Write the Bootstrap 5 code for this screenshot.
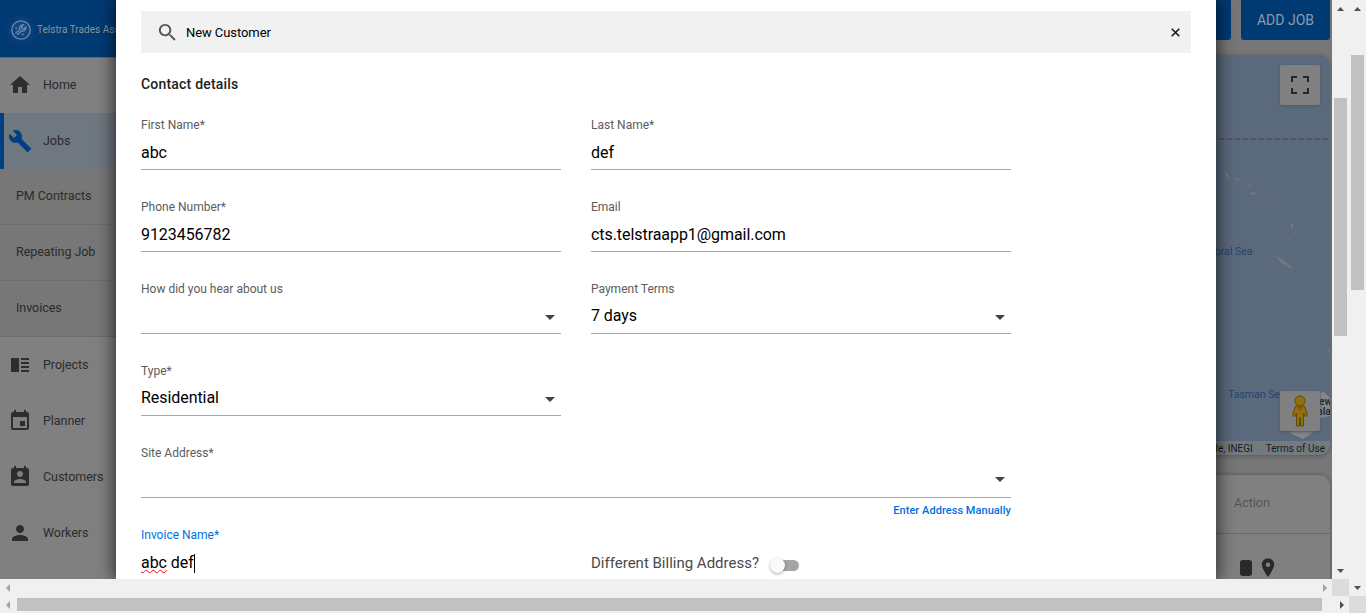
<!DOCTYPE html>
<html lang="en">
<head>
<meta charset="utf-8">
<title>New Customer</title>
<link href="https://cdn.jsdelivr.net/npm/bootstrap@5.3.0/dist/css/bootstrap.min.css" rel="stylesheet">
<style>
body{font-family:Roboto,sans-serif;width:1366px;height:613px;overflow:hidden;background:#f0f0f0;color:#2b2b2b}
svg{display:block;flex:none}
.shell{width:1366px;height:613px}
.pane{width:1332px;height:579px;background:#777}
.side{width:200px;background:#808080;font-size:12.5px;letter-spacing:-.05px}
.brand{height:58px;margin-bottom:-1px;background:#003a73;color:#8e9499;font-size:10px;letter-spacing:.02px;border-bottom:1px solid #5d6b7a;padding:2px 0 0 11px;gap:6px;white-space:nowrap}
.brand svg{filter:drop-shadow(0 0 4px #3568a0)}
.item{height:56px;padding-left:8px;gap:11px}
.item.on{background:#6f7780;border-left:4px solid #003f80;padding-left:4px}
.item.sub{background:#777;border-bottom:1px solid #6e6e6e;padding-left:16px}
.page-right{width:260px;margin-right:2px}
.acts{height:40px;gap:10px}
.acts>div{background:#003a73;color:#8e9aa8;border-radius:0 0 3px 3px;font-size:14px}
.acts .add{width:89px}
.map-box{height:400px;margin-top:15px;background:#5a6a7c;border-radius:0 11px 10px 0;overflow:hidden;box-shadow:0 1px 4px #555}
.over{position:absolute}
.ctl{width:40px;height:40px;right:10px;background:#808080;border-radius:2px;box-shadow:0 1px 3px #4d5560}
.ctl.full{top:10px}
.ctl.peg{top:336px}
.terms{right:0;bottom:0;height:14px;width:260px;background:#737a80;color:#1b1b1b;font-size:10px}
.tbl{margin-top:20px;height:110px;background:#808080;border-radius:0 11px 0 0;box-shadow:0 0 4px #555}
.tbl-h{height:59px;border-bottom:1px solid #696969;padding:0 0 1px 164px;font-size:12.5px;color:#555}
.tbl-r{padding:22px 0 0 167px;gap:3px}
.dialog{left:116px;top:0;width:1100px;height:579px;background:#fff;box-shadow:0 0 16px 2px rgba(0,0,0,.65);padding:11px 25px 0}
.find{height:42px;background:#f1f1f1;color:#000;font-size:13px;letter-spacing:-.08px;padding:0 10px 0 15px;gap:7px}
.find span{padding-top:2px}
.ttl{height:62px;font-size:14px;font-weight:500;letter-spacing:.2px;color:#212121}
.form-w{width:870px}
.fields{display:grid;grid-template-columns:420px 420px;column-gap:30px}
.fld{height:82px}
.fld.wide{grid-column:1/3}
.lab{height:20px;line-height:20px;font-size:12px;letter-spacing:0;color:#5c5c5c}
.lab.act{color:#0070e0}
.val{height:35px;border-bottom:1px solid #a6a6a6;font-size:16px;letter-spacing:-.06px;color:#000;padding-right:6px}
.val.txt{padding-top:2px}
.val svg{margin-top:2px}
.wide .val svg{margin-top:-2px}
.lnk{height:26px;line-height:25px;font-size:11px;font-weight:500;letter-spacing:.05px;color:#0070e0}
.spell{text-decoration:underline wavy #f00 1px;text-underline-offset:1px;text-decoration-skip-ink:none}
.caret{width:1px;height:19px;background:#000}
.bill{font-size:15px;color:#4a4a4a;letter-spacing:0;gap:11px;padding-top:31px}
.tog{width:28px;height:16px;margin-top:1px}
.tog i{width:26px;height:11px;background:#a5a5a5;border-radius:6px;left:3px;top:3px}
.tog b{width:15px;height:15px;border-radius:50%;background:#fafafa;left:0;top:1px;box-shadow:0 1px 3px rgba(0,0,0,.35)}
.vbar{width:17px;padding:7px 0 6px}
.hbar{height:17px;padding:0 5px 0 6px}
.thumb{background:#c1c1c1;width:13px}
.thumb.inner{height:238px;margin-top:87px}
.thumb.outer{height:235px;margin-top:44px}
.thumb.horiz{width:1305px;height:13px;margin-left:7px}
.corner{width:17px;height:17px;background:#dcdcdc}
</style>
</head>
<body>
<div class="shell d-flex">
 <div class="d-flex flex-column">
  <div class="d-flex">
   <div class="d-flex flex-column">
    <div class="pane d-flex justify-content-between position-relative overflow-hidden">
     <nav class="side">
      <div class="brand d-flex align-items-center">
       <svg width="20" height="20" viewBox="0 0 20 20" fill="none" stroke="#6f89a8" stroke-width="1.3"><circle cx="10" cy="10" r="9.2"/><path d="M4.500 13.500 8.700 9.400c-.8-2.500.8-4.800 3.600-4.600L10.600 6.700l.4 1.900 1.900.4 2-1.900c.3 2.700-2 4.600-4.500 3.700L6.300 15"/><path d="M11 13.500 12.500 15M4.500 7.500 6 9"/></svg>
       <span>Telstra Trades Assist</span>
      </div>
      <div class="item d-flex align-items-center"><svg width="24" height="24" viewBox="0 0 24 24" fill="#2d2d2d"><path d="M10 20v-6h4v6h5v-8h3L12 3 2 12h3v8z"/></svg><span>Home</span></div>
      <div class="item on d-flex align-items-center"><svg width="24" height="24" viewBox="0 0 24 24" fill="#003f80"><path d="M22.700 19l-9.100-9.100c.9-2.300.4-5-1.500-6.900-2-2-5-2.400-7.400-1.300L9 6 6 9 1.600 4.700C.4 7.100.9 10.100 2.900 12.100c1.900 1.900 4.600 2.400 6.900 1.500l9.100 9.100c.4.4 1 .4 1.400 0l2.300-2.300c.5-.4.5-1.100.1-1.400z"/></svg><span>Jobs</span></div>
      <div class="item sub d-flex align-items-center">PM Contracts</div>
      <div class="item sub d-flex align-items-center">Repeating Job</div>
      <div class="item sub d-flex align-items-center">Invoices</div>
      <div class="item d-flex align-items-center"><svg width="24" height="24" viewBox="0 0 24 24" fill="#2d2d2d"><path d="M3 5h8v14H3zM13 5h8v2h-8zM13 9h8v2h-8zM13 13h8v2h-8zM13 17h8v2h-8z"/></svg><span>Projects</span></div>
      <div class="item d-flex align-items-center"><svg width="24" height="24" viewBox="0 0 24 24" fill="#2d2d2d"><path d="M17 12h-5v5h5v-5zM16 1v2H8V1H6v2H5c-1.110 0-1.990.9-1.990 2L3 19c0 1.100.89 2 2 2h14c1.100 0 2-.9 2-2V5c0-1.100-.9-2-2-2h-1V1h-2zm3 18H5V8h14v11z"/></svg><span>Planner</span></div>
      <div class="item d-flex align-items-center"><svg width="24" height="24" viewBox="0 0 24 24" fill="#2d2d2d"><path d="M19 3h-1V1h-2v2H8V1H6v2H5c-1.110 0-2 .9-2 2v14c0 1.100.89 2 2 2h14c1.100 0 2-.9 2-2V5c0-1.100-.9-2-2-2zm-7 3c1.660 0 3 1.340 3 3s-1.340 3-3 3-3-1.340-3-3 1.340-3 3-3zm6 12H6v-1c0-2 4-3.100 6-3.100s6 1.100 6 3.100v1z"/></svg><span>Customers</span></div>
      <div class="item d-flex align-items-center"><svg width="24" height="24" viewBox="0 0 24 24" fill="#2d2d2d"><path d="M12 12c2.210 0 4-1.790 4-4s-1.790-4-4-4-4 1.790-4 4 1.790 4 4 4zm0 2c-2.670 0-8 1.340-8 4v2h16v-2c0-2.660-5.330-4-8-4z"/></svg><span>Workers</span></div>
     </nav>
     <main class="page-right">
      <div class="acts d-flex justify-content-end">
       <div class="flex-fill"></div>
       <div class="add d-flex align-items-center justify-content-center">ADD JOB</div>
      </div>
      <div class="map-box position-relative">
       <svg width="260" height="386" viewBox="0 0 260 386">
        <path d="M140 84H260" stroke="#584e5e" stroke-width="1.500" stroke-dasharray="6 2"/>
        <g fill="#74777a"><path d="m153 116 3 1 4 6-3-1zM163 122l5 3-3 0zM166 124l4 0-2 2zM176 127l5 4-2 0zM187 132l3 6-2-2zM181 137l5 1v2l-5-1zM192 142l4 3-3-1zM220 169h3v5l-2-1zM224 176l3 3-2 0zM206 201l6 3 11 9-3 0-9-5zM258 295l2-1v6z"/>
        <path d="M249 338l5-1 6 6v18l-10 2zM220 378l12-10 18 1-8 9-9 6z" fill="#838789"/></g>
        <g fill="#24446f" font-size="10.500"><text x="138" y="200">Coral Sea</text><text x="158" y="343">Tasman Sea</text></g>
        <g fill="#222" font-size="10" font-weight="500"><text x="242" y="350">New</text><text x="236" y="360">Zealand</text></g>
       </svg>
       <div class="ctl full over d-flex align-items-center justify-content-center"><svg width="18" height="18" viewBox="0 0 18 18" fill="none" stroke="#292929" stroke-width="2"><path d="M1 6V1h5M12 1h5v5M17 12v5h-5M6 17H1v-5"/></svg></div>
       <div class="ctl peg over d-flex align-items-center justify-content-center"><svg width="18" height="32" viewBox="0 0 18 32"><path d="M4.500 11h9l3 9-2 2-2-4v13H9.500v-8h-1v8H5.500V18l-2 4-2-2z" fill="#94700a" stroke="#5d4a14"/><path d="M5.500 11h7L9 17z" fill="#96501c"/><circle cx="9" cy="6" r="5" fill="#94700a" stroke="#5d4a14"/></svg></div>
       <div class="terms over d-flex align-items-center justify-content-end"><span class="pe-2">Google, INEGI</span><span class="border-start border-secondary ps-1 pe-1">Terms of Use&hairsp;</span></div>
      </div>
      <div class="tbl">
       <div class="tbl-h d-flex align-items-center">Action</div>
       <div class="tbl-r d-flex">
        <svg width="18" height="24" viewBox="0 0 18 24" fill="#292929"><path d="M3 5.500 5 4h8l2 1.500v13L13 20H5l-2-1.500z"/></svg>
        <svg width="24" height="24" viewBox="0 0 24 24" fill="#292929"><path d="M10 2.500c-3.600 0-6.200 2.700-6.200 6.100C3.800 13 10 21 10 21s6.200-8 6.200-12.400c0-3.400-2.600-6.100-6.200-6.100zm0 8.500a2.300 2.300 0 1 1 0-4.600 2.300 2.300 0 0 1 0 4.600z"/></svg>
       </div>
      </div>
     </main>
     <section class="dialog over">
      <div class="find d-flex align-items-center">
       <svg width="23" height="23" viewBox="0 0 24 24" fill="#555"><path d="M15.500 14h-.79l-.28-.27C15.410 12.590 16 11.110 16 9.500 16 5.910 13.090 3 9.500 3S3 5.910 3 9.500 5.910 16 9.500 16c1.610 0 3.090-.59 4.230-1.570l.27.28v.79l5 4.990L20.490 19l-4.990-5zm-6 0C7.010 14 5 11.990 5 9.500S7.010 5 9.500 5 14 7.010 14 9.500 11.990 14 9.500 14z"/></svg>
       <span class="flex-fill">New Customer</span>
       <svg width="11" height="11" viewBox="0 0 11 11" stroke="#111" stroke-width="1.500"><path d="m1.700 1.700 7.600 7.600m0-7.600-7.600 7.600"/></svg>
      </div>
      <div class="ttl d-flex align-items-center">Contact details</div>
      <div class="form-w">
       <div class="fields">
        <div class="fld"><div class="lab">First Name*</div><div class="val txt d-flex align-items-center">abc</div></div>
        <div class="fld"><div class="lab">Last Name*</div><div class="val txt d-flex align-items-center">def</div></div>
        <div class="fld"><div class="lab">Phone Number*</div><div class="val txt d-flex align-items-center">9123456782</div></div>
        <div class="fld"><div class="lab">Email</div><div class="val txt d-flex align-items-center">cts.telstraapp1@gmail.com</div></div>
        <div class="fld"><div class="lab">How did you hear about us</div><div class="val d-flex align-items-center justify-content-end"><svg width="10" height="5" viewBox="0 0 10 5" fill="#444"><path d="M0 0h10L5 5z"/></svg></div></div>
        <div class="fld"><div class="lab">Payment Terms</div><div class="val d-flex align-items-center justify-content-between"><span>7 days</span><svg width="10" height="5" viewBox="0 0 10 5" fill="#444"><path d="M0 0h10L5 5z"/></svg></div></div>
        <div class="fld"><div class="lab">Type*</div><div class="val d-flex align-items-center justify-content-between"><span>Residential</span><svg width="10" height="5" viewBox="0 0 10 5" fill="#444"><path d="M0 0h10L5 5z"/></svg></div></div>
        <div class="fld wide"><div class="lab">Site Address*</div><div class="val d-flex align-items-center justify-content-end"><svg width="10" height="5" viewBox="0 0 10 5" fill="#444"><path d="M0 0h10L5 5z"/></svg></div><div class="lnk text-end">Enter Address Manually</div></div>
        <div class="fld"><div class="lab act">Invoice Name*</div><div class="val txt d-flex align-items-center"><span><span class="spell">abc</span> def</span><span class="caret"></span></div></div>
        <div class="bill d-flex align-items-start"><span class="lh-1">Different Billing Address?</span><span class="tog position-relative"><i class="over"></i><b class="over"></b></span></div>
       </div>
      </div>
     </section>
    </div>
    <div class="hbar d-flex align-items-center justify-content-between">
     <svg width="4" height="8" viewBox="0 0 4 8" fill="#a3a3a3"><path d="M4 0v8L0 4z"/></svg><svg width="4" height="8" viewBox="0 0 4 8" fill="#a3a3a3"><path d="M0 0v8l4-4z"/></svg>
    </div>
   </div>
   <div class="d-flex flex-column">
    <div class="vbar flex-fill d-flex flex-column align-items-center">
     <svg width="7" height="4" viewBox="0 0 7 4" fill="#505050"><path d="M0 4h7L3.500 0z"/></svg>
     <div class="thumb inner"></div>
     <svg class="mt-auto" width="7" height="4" viewBox="0 0 7 4" fill="#505050"><path d="M0 0h7L3.500 4z"/></svg>
    </div>
    <div class="corner"></div>
   </div>
  </div>
  <div class="hbar d-flex align-items-center">
   <svg width="4" height="8" viewBox="0 0 4 8" fill="#a3a3a3"><path d="M4 0v8L0 4z"/></svg>
   <div class="thumb horiz"></div>
   <svg class="ms-auto" width="4" height="8" viewBox="0 0 4 8" fill="#505050"><path d="M0 0v8l4-4z"/></svg>
  </div>
 </div>
 <div class="d-flex flex-column">
  <div class="vbar flex-fill d-flex flex-column align-items-center">
   <svg width="7" height="4" viewBox="0 0 7 4" fill="#505050"><path d="M0 4h7L3.500 0z"/></svg>
   <div class="thumb outer"></div>
   <svg class="mt-auto" width="7" height="4" viewBox="0 0 7 4" fill="#505050"><path d="M0 0h7L3.500 4z"/></svg>
  </div>
  <div class="corner"></div>
 </div>
</div>
<script src="https://cdn.jsdelivr.net/npm/bootstrap@5.3.0/dist/js/bootstrap.bundle.min.js"></script>
</body>
</html>
